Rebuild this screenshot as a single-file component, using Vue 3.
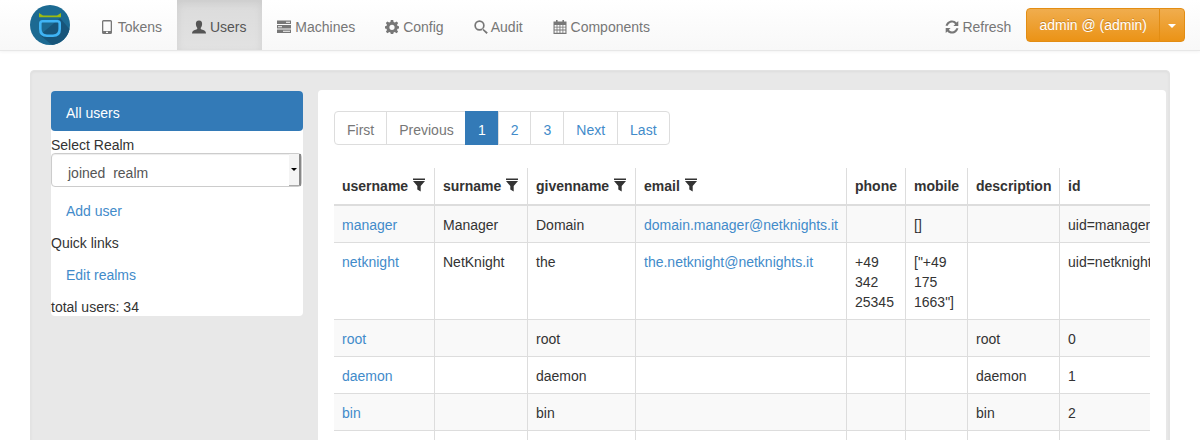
<template>
  <div class="page">
    <nav class="navbar">
      <svg class="logo" viewBox="0 0 40 40" width="40" height="40">
        <circle cx="20" cy="20" r="20" fill="#1c6a92" />
        <path d="M10 30 L30 13 L39.5 24 A20 20 0 0 1 22 39.9 Z" fill="#17557a" />
        <path d="M9 8 L13 10.5 H27 L31 8 V12.3 H9 Z" fill="#9dbb10" />
        <path d="M12.5 16.3 H27.5 Q29.7 16.3 29.7 18.5 V24 Q29.7 30.7 23 30.7 H17 Q10.3 30.7 10.3 24 V18.5 Q10.3 16.3 12.5 16.3 Z" fill="none" stroke="#3fb4f5" stroke-width="2.6" />
      </svg>
      <ul class="nav">
        <li v-for="item in navItems" :key="item.label" :class="{ active: item.label === 'Users' }">
          <svg class="gi" viewBox="0 0 14 14" width="14" height="14" fill="currentColor">
            <path :d="item.icon" fill-rule="evenodd" />
          </svg>
          {{ item.label }}
        </li>
      </ul>
      <div class="nav-right">
        <span class="refresh">
          <svg class="gi" viewBox="0 0 14 14" width="14" height="14" fill="currentColor">
            <path :d="refreshIcon" />
          </svg>
          Refresh
        </span>
        <div class="btn-group">
          <button class="btn-admin">admin @ (admin)</button>
          <button class="btn-caret"><span class="caret"></span></button>
        </div>
      </div>
    </nav>

    <div class="well">
      <aside class="sidebar">
        <div class="pill">All users</div>
        <div class="label realm">Select Realm</div>
        <div class="select">
          <span class="select-text">joined&nbsp; realm</span>
          <span class="select-arrow"></span>
        </div>
        <a class="side-link add">Add user</a>
        <div class="label quick">Quick links</div>
        <a class="side-link edit">Edit realms</a>
        <div class="label total">total users: 34</div>
      </aside>

      <main class="content">
        <ul class="pagination">
          <li v-for="p in pages" :key="p.label" :class="{ off: p.off, current: p.current }">{{ p.label }}</li>
        </ul>
        <div class="table-wrap">
          <table class="users">
            <colgroup>
              <col v-for="w in colWidths" :key="w.name" :style="{ width: w.px + 'px' }" />
            </colgroup>
            <thead>
              <tr>
                <th v-for="c in colWidths" :key="c.name">
                  {{ c.name }}
                  <svg v-if="c.filter" class="filter" viewBox="0 0 14 14" width="14" height="14" fill="currentColor">
                    <path d="M1 0.5 H13 V2 H1 Z M1 3 H13 L8.7 8 V13.5 L5.3 11.5 V8 Z" />
                  </svg>
                </th>
              </tr>
            </thead>
            <tbody>
              <tr v-for="row in rows" :key="row.username">
                <td><a>{{ row.username }}</a></td>
                <td>{{ row.surname }}</td>
                <td>{{ row.givenname }}</td>
                <td><a>{{ row.email }}</a></td>
                <td>{{ row.phone }}</td>
                <td>{{ row.mobile }}</td>
                <td>{{ row.description }}</td>
                <td class="nowrap">{{ row.id }}</td>
              </tr>
              <tr class="blank">
                <td v-for="c in colWidths" :key="c.name"></td>
              </tr>
            </tbody>
          </table>
        </div>
      </main>
    </div>
  </div>
</template>

<script setup>
const navItems = [
  { label: 'Tokens', icon: 'M3.5 0 H10.5 Q12 0 12 1.5 V12.5 Q12 14 10.5 14 H3.5 Q2 14 2 12.5 V1.5 Q2 0 3.5 0 Z M3.3 1.6 V11 H10.7 V1.6 Z M6 11.7 H8 V13 H6 Z' },
  { label: 'Users', icon: 'M7 0.5 C9.3 0.5 10.3 2.2 10.1 4.3 C10 6 9.3 7.3 8.7 8 C8.5 8.8 9 9.2 10.5 9.8 C12.5 10.5 14 11 14 13.5 H0 C0 11 1.5 10.5 3.5 9.8 C5 9.2 5.5 8.8 5.3 8 C4.7 7.3 4 6 3.9 4.3 C3.7 2.2 4.7 0.5 7 0.5 Z' },
  { label: 'Machines', icon: 'M0 0.5 H14 V4 H0 Z M9 1.7 V2.8 H13 V1.7 Z M0 5 H14 V8.5 H0 Z M1 6.2 V7.3 H5 V6.2 Z M0 9.5 H14 V13 H0 Z M6 10.7 V11.8 H13 V10.7 Z' },
  { label: 'Config', icon: 'M5.8 0 H8.2 L8.6 2 L9.9 2.5 L11.6 1.4 L13.2 3 L12 4.7 L12.6 6 L14 6.3 V8.4 L12.6 8.7 L12 10 L13.1 11.7 L11.5 13.2 L9.8 12.1 L8.6 12.6 L8.2 14 H5.8 L5.4 12.6 L4.2 12.1 L2.5 13.2 L0.9 11.7 L2 10 L1.4 8.7 L0 8.4 V6.3 L1.4 6 L2 4.7 L0.8 3 L2.4 1.4 L4.1 2.5 L5.4 2 Z M7 4.7 A2.6 2.6 0 1 0 7 9.9 A2.6 2.6 0 1 0 7 4.7 Z' },
  { label: 'Audit', icon: 'M5.5 0.3 A5.2 5.2 0 1 1 5.5 10.7 A5.2 5.2 0 1 1 5.5 0.3 Z M5.5 2 A3.5 3.5 0 1 0 5.5 9 A3.5 3.5 0 1 0 5.5 2 Z M9 8.4 L13.8 12.4 L12.5 13.9 L8 9.6 Z' },
  { label: 'Components', icon: 'M3 0 H4.6 V1.5 H9.4 V0 H11 V1.5 H13.5 V14 H0.5 V1.5 H3 Z M1.6 5 V6.8 H3.6 V5 Z M4.4 5 V6.8 H6.5 V5 Z M7.4 5 V6.8 H9.5 V5 Z M10.3 5 V6.8 H12.4 V5 Z M1.6 7.6 V9.6 H3.6 V7.6 Z M4.4 7.6 V9.6 H6.5 V7.6 Z M7.4 7.6 V9.6 H9.5 V7.6 Z M10.3 7.6 V9.6 H12.4 V7.6 Z M1.6 10.4 V12.8 H3.6 V10.4 Z M4.4 10.4 V12.8 H6.5 V10.4 Z M7.4 10.4 V12.8 H9.5 V10.4 Z M10.3 10.4 V12.8 H12.4 V10.4 Z' }
]

const refreshIcon = 'M7 0.5 C8.9 0.5 10.5 1.3 11.6 2.6 L13.3 1 V6 H8.4 L10.1 4.2 C9.4 3.2 8.3 2.6 7 2.6 C5 2.6 3.3 4 2.8 5.8 H0.6 C1.2 2.8 3.8 0.5 7 0.5 Z M0.7 8 H5.6 L3.9 9.8 C4.6 10.8 5.7 11.4 7 11.4 C9 11.4 10.7 10 11.2 8.2 H13.4 C12.8 11.2 10.2 13.5 7 13.5 C5.1 13.5 3.5 12.7 2.4 11.4 L0.7 13 Z'

const pages = [
  { label: 'First', off: true },
  { label: 'Previous', off: true },
  { label: '1', current: true },
  { label: '2' },
  { label: '3' },
  { label: 'Next' },
  { label: 'Last' }
]

const colWidths = [
  { name: 'username', px: 100, filter: true },
  { name: 'surname', px: 93, filter: true },
  { name: 'givenname', px: 108, filter: true },
  { name: 'email', px: 211, filter: true },
  { name: 'phone', px: 59 },
  { name: 'mobile', px: 62 },
  { name: 'description', px: 92 },
  { name: 'id', px: 200 }
]

const rows = [
  { username: 'manager', surname: 'Manager', givenname: 'Domain', email: 'domain.manager@netknights.it', phone: '', mobile: '[]', description: '', id: 'uid=manager' },
  { username: 'netknight', surname: 'NetKnight', givenname: 'the', email: 'the.netknight@netknights.it', phone: '+49 342 25345', mobile: '["+49 175 1663"]', description: '', id: 'uid=netknight' },
  { username: 'root', surname: '', givenname: 'root', email: '', phone: '', mobile: '', description: 'root', id: '0' },
  { username: 'daemon', surname: '', givenname: 'daemon', email: '', phone: '', mobile: '', description: 'daemon', id: '1' },
  { username: 'bin', surname: '', givenname: 'bin', email: '', phone: '', mobile: '', description: 'bin', id: '2' }
]
</script>

<style>
html,
body {
  margin: 0;
  height: 440px;
  overflow: hidden;
  background: #fff;
}
</style>

<style scoped>
.page {
  font-family: "Liberation Sans", Arial, sans-serif;
  font-size: 14px;
  line-height: 20px;
  color: #333;
  height: 440px;
  overflow: hidden;
}

.navbar {
  height: 50px;
  display: flex;
  align-items: center;
  padding: 0 15px 0 30px;
  box-sizing: content-box;
  background: linear-gradient(to bottom, #fff 0, #f8f8f8 100%);
  border-bottom: 1px solid #e7e7e7;
  box-shadow: 0 1px 3px rgba(0, 0, 0, 0.05);
}

.logo {
  flex: none;
}

.nav {
  list-style: none;
  margin: 0 0 0 15px;
  padding: 0;
  display: flex;
  height: 50px;
}

.nav li {
  padding: 17px 15px 13px;
  color: #777;
  white-space: nowrap;
}

.nav li.active {
  padding-right: 16px;
  color: #555;
  background: linear-gradient(to bottom, #dbdbdb 0, #e2e2e2 100%);
  box-shadow: inset 0 3px 9px rgba(0, 0, 0, 0.075);
}

.gi {
  vertical-align: -2px;
}

.nav-right {
  margin-left: auto;
  display: flex;
  align-items: center;
}

.refresh {
  color: #777;
  margin-right: 15px;
  padding-top: 4px;
}

.btn-group {
  display: flex;
  margin-top: -1px;
}

.btn-admin,
.btn-caret {
  font: inherit;
  color: #fff;
  height: 34px;
  border: 1px solid #e38d13;
  background: linear-gradient(to bottom, #f0ad4e 0, #eb9316 100%);
  text-shadow: 0 -1px 0 rgba(0, 0, 0, 0.2);
}

.btn-admin {
  padding: 6px 12px;
  border-radius: 4px 0 0 4px;
}

.btn-caret {
  padding: 0 8px;
  margin-left: -1px;
  border-radius: 0 4px 4px 0;
}

.caret {
  display: inline-block;
  width: 0;
  height: 0;
  vertical-align: middle;
  border-top: 4px solid #fff;
  border-left: 4px solid transparent;
  border-right: 4px solid transparent;
}

.well {
  margin: 19px 30px 0;
  padding: 20px 3px 20px 20px;
  display: flex;
  gap: 15px;
  align-items: flex-start;
  height: 400px;
  box-sizing: border-box;
  background: #e8e8e8;
  border: 1px solid #e3e3e3;
  border-radius: 4px;
  box-shadow: inset 0 1px 3px rgba(0, 0, 0, 0.05);
}

.sidebar {
  width: 252px;
  flex: none;
  background: #fff;
  border-radius: 4px;
  height: 225px;
}

.pill {
  height: 40px;
  line-height: 44px;
  padding-left: 15px;
  color: #fff;
  background: #337ab7;
  border-radius: 4px;
}

.label {
  height: 20px;
}

.realm {
  height: 22px;
  line-height: 28px;
}

.select {
  height: 34px;
  margin-right: 1px;
  box-sizing: border-box;
  border: 1px solid #ccc;
  border-radius: 4px;
  display: flex;
  align-items: center;
  justify-content: space-between;
  padding-left: 16px;
  color: #555;
  box-shadow: inset 0 1px 1px rgba(0, 0, 0, 0.075);
}

.select-text {
  margin-top: 6px;
}

.select-arrow {
  width: 12px;
  height: 32px;
  flex: none;
  position: relative;
  background: #f4f4f4;
  border-right: 2px solid #888;
  border-bottom: 1px solid #aaa;
  box-sizing: border-box;
}

.select-arrow::after {
  content: "";
  position: absolute;
  left: 2px;
  top: 14px;
  border-top: 3px solid #000;
  border-left: 3px solid transparent;
  border-right: 3px solid transparent;
}

.side-link {
  display: block;
  padding-left: 15px;
  color: #428bca;
}

.add {
  margin-top: 14px;
}

.quick {
  margin-top: 12px;
}

.edit {
  margin-top: 12px;
}

.total {
  margin-top: 12px;
}

.content {
  flex: 1;
  min-width: 0;
  background: #fff;
  border-radius: 4px;
  padding: 20px 16px;
  height: 400px;
  box-sizing: border-box;
  margin-top: -1px;
}

.pagination {
  list-style: none;
  margin: 1px 0 0;
  padding: 0;
  display: inline-flex;
}

.pagination li {
  padding: 8px 12px 4px;
  height: 34px;
  box-sizing: border-box;
  border: 1px solid #ddd;
  margin-left: -1px;
  color: #428bca;
}

.pagination li:first-child {
  margin-left: 0;
  border-radius: 4px 0 0 4px;
}

.pagination li:nth-child(2) {
  padding-right: 11.2px;
}

.pagination li:last-child {
  border-radius: 0 4px 4px 0;
}

.pagination li.off {
  color: #777;
}

.pagination li.current {
  color: #fff;
  background: #337ab7;
  border-color: #337ab7;
}

.table-wrap {
  margin-top: 23px;
  overflow: hidden;
}

.users {
  border-collapse: collapse;
  table-layout: fixed;
  width: 925px;
}

.users th,
.users td {
  padding: 9px 8px 7px 8.5px;
  border-left: 1px solid #ddd;
  border-top: 1px solid #ddd;
  vertical-align: top;
  text-align: left;
}

.users th {
  padding-top: 8px;
  padding-bottom: 8px;
  border-top: 0;
  border-bottom: 2px solid #ddd;
  vertical-align: bottom;
  white-space: nowrap;
}

.users th:first-child,
.users td:first-child {
  padding-left: 8px;
  border-left: 0;
}

.users tbody tr:nth-child(odd) {
  background: #f9f9f9;
}

.users .blank {
  height: 37px;
}

.users .blank:nth-child(odd) {
  background: #fff;
}

.users a {
  color: #428bca;
}

.nowrap {
  white-space: nowrap;
}

.filter {
  vertical-align: -1px;
  color: #333;
}
</style>
